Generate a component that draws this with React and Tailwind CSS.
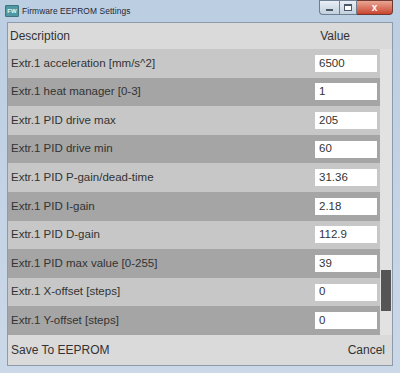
import React from 'react';

const rows = [
  ['Extr.1 acceleration [mm/s^2]', '6500'],
  ['Extr.1 heat manager [0-3]', '1'],
  ['Extr.1 PID drive max', '205'],
  ['Extr.1 PID drive min', '60'],
  ['Extr.1 PID P-gain/dead-time', '31.36'],
  ['Extr.1 PID I-gain', '2.18'],
  ['Extr.1 PID D-gain', '112.9'],
  ['Extr.1 PID max value [0-255]', '39'],
  ['Extr.1 X-offset [steps]', '0'],
  ['Extr.1 Y-offset [steps]', '0'],
];

export default function App() {
  return (
    <div className="w-[400px] h-[373px] bg-gradient-to-b from-[#bccee2] to-[#cbd8e8] flex flex-col overflow-hidden" style={{ fontFamily: '"Liberation Sans", Arial, sans-serif' }}>
      {/* title bar */}
      <div className="h-[22px] flex items-start shrink-0">
        <div className="flex items-center gap-[3px] pl-[5px] pt-[5px]">
          <div className="w-[14px] h-[12px] bg-[#4f98a3] border border-[#3a7580] rounded-[1px] flex items-center justify-center">
            <span className="text-[6px] text-[#dff] font-bold leading-none">FW</span>
          </div>
          <span className="text-[8.4px] text-[#1e2a36] tracking-[0.1px]">Firmware EEPROM Settings</span>
        </div>
        <div className="ml-auto mr-[7px] flex h-[15px]">
          <div className="w-[20px] border border-[#6f7f92] border-r-0 rounded-bl-[4px] bg-gradient-to-b from-[#e8eef5] to-[#c3d0de] flex items-center justify-center">
            <div className="w-[7px] h-[2px] bg-white border border-[#4a5868] mt-[4px]" />
          </div>
          <div className="w-[18px] border border-[#6f7f92] bg-gradient-to-b from-[#e8eef5] to-[#c3d0de] flex items-center justify-center">
            <div className="w-[8px] h-[7px] border border-[#4a5868] border-t-2 bg-white" />
          </div>
          <div className="w-[36px] border border-[#6f3a32] border-l-0 rounded-br-[4px] bg-gradient-to-b from-[#e8a594] to-[#c9442e] flex items-center justify-center">
            <span className="text-[10px] text-white font-bold leading-none">x</span>
          </div>
        </div>
      </div>

      {/* client */}
      <div className="mx-[7px] flex-1 bg-[#dadada] border border-[#8d9aab] flex flex-col text-[11.5px] text-[#333]">
        <div className="h-[26px] flex items-center shrink-0">
          <span className="pl-[2px] text-[12px]">Description</span>
          <span className="ml-auto mr-[42px] text-[12px]">Value</span>
        </div>
        <div className="flex">
          <div className="flex-1 flex flex-col">
            {rows.map(([label, value], i) => (
              <div key={label} className={`h-[28.6px] flex items-center ${i % 2 === 0 ? 'bg-[#c7c7c7]' : 'bg-[#a5a5a5]'}`}>
                <span className="pl-[3px]">{label}</span>
                <div className="ml-auto mr-[3px] w-[62px] h-[17px] bg-white flex items-center pl-[4px]">{value}</div>
              </div>
            ))}
          </div>
          <div className="w-[12px] bg-[#e2e2e2] flex flex-col">
            <div className="mt-[221px] mx-[1px] h-[41px] bg-[#555555]" />
          </div>
        </div>
        <div className="flex-1 flex items-center px-[3px] text-[12px]">
          <span>Save To EEPROM</span>
          <span className="ml-auto mr-[4px]">Cancel</span>
        </div>
      </div>
      <div className="h-[7px] shrink-0" />
    </div>
  );
}
